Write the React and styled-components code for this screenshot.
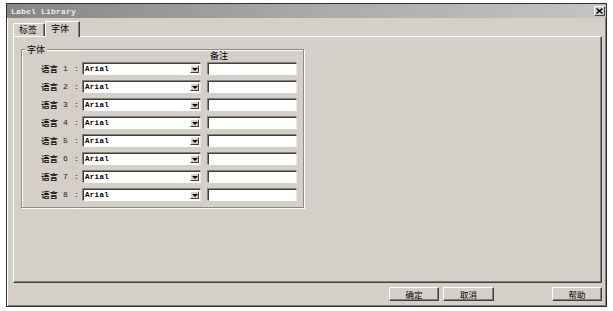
import React from 'react'
import styled, { createGlobalStyle } from 'styled-components'

const GlobalStyle = createGlobalStyle`
  html, body {
    margin: 0;
    background: #ffffff;
  }
  * {
    box-sizing: border-box;
  }
`

const cjk = `"Noto Sans CJK SC", "Liberation Sans", sans-serif`

const Window = styled.div`
  margin: 3px 0 0 6px;
  width: 601px;
  height: 304px;
  border: 1px solid #2e2e2e;
  background: #d4d0c8;
  display: flex;
  flex-direction: column;
  box-shadow: inset 1px 1px 0 #ffffff, inset -1px -1px 0 #808080;
`

const TitleBar = styled.div`
  height: 14px;
  display: flex;
  align-items: center;
  justify-content: space-between;
  padding: 0 1px 0 4px;
  background: linear-gradient(to right, #868686, #a9a9a9 50%, #c4c4c4);
`

const Title = styled.span`
  font-family: "Liberation Mono", monospace;
  font-weight: bold;
  font-size: 8px;
  color: #ececec;
  letter-spacing: 0.2px;
`

const CloseButton = styled.div`
  width: 11px;
  height: 10px;
  background: #d4d0c8;
  border: 1px solid;
  border-color: #ffffff #404040 #404040 #ffffff;
  display: flex;
  align-items: center;
  justify-content: center;
`

const Body = styled.div`
  flex: 1;
  display: flex;
  flex-direction: column;
  padding: 3px 4px 0 6px;
`

const TabRow = styled.div`
  height: 15px;
  display: flex;
  align-items: flex-end;
`

const Tab = styled.div`
  position: relative;
  z-index: ${p => (p.$active ? 1 : 0)};
  height: ${p => (p.$active ? '16px' : '13px')};
  margin-bottom: ${p => (p.$active ? '-1px' : '0')};
  width: ${p => p.$width}px;
  padding: ${p => (p.$active ? '2px 0 0 5px' : '1px 0 0 5px')};
  background: #d4d0c8;
  border-top: 1px solid #ffffff;
  border-left: 1px solid #ffffff;
  border-right: 1px solid #404040;
  box-shadow: inset -1px 0 0 #808080;
  font-family: ${cjk};
  font-size: 9px;
  line-height: 10px;
  color: #000;
`

const Panel = styled.div`
  height: 247px;
  border: 1px solid;
  border-color: #ffffff #404040 #404040 #ffffff;
  box-shadow: inset -1px -1px 0 #808080;
  padding: 12px 0 0 7px;
`

const Group = styled.div`
  position: relative;
  width: 283px;
  height: 159px;
  border: 1px solid #8a8a8a;
  box-shadow: inset 1px 1px 0 #ffffff, 1px 1px 0 #ffffff;
  padding: 1px 0 0 19px;
`

const Legend = styled.span`
  position: absolute;
  top: -6px;
  left: 3px;
  padding: 0 2px;
  background: #d4d0c8;
  font-family: ${cjk};
  font-size: 9px;
  line-height: 11px;
  color: #000;
`

const Header = styled.div`
  height: 10px;
  padding-left: 169px;
  font-family: ${cjk};
  font-size: 9px;
  line-height: 10px;
  color: #000;
`

const Rows = styled.div`
  margin-top: 2px;
  display: flex;
  flex-direction: column;
  gap: 6px;
`

const Row = styled.div`
  height: 12px;
  display: flex;
  align-items: center;
`

const Label = styled.div`
  width: 42px;
  height: 12px;
  display: flex;
  align-items: center;
  color: #000;
`

const Word = styled.span`
  font-family: ${cjk};
  font-size: 8.5px;
  font-weight: 500;
  line-height: 10px;
  margin-top: -2px;
`

const Num = styled.span`
  width: ${p => p.$width}px;
  padding-left: ${p => p.$pad}px;
  font-family: "Liberation Mono", monospace;
  font-size: 8px;
  line-height: 10px;
  color: #222;
`

const Select = styled.div`
  width: 118px;
  height: 12px;
  display: flex;
  align-items: center;
  justify-content: space-between;
  background: #ffffff;
  border-top: 1px solid #404040;
  border-left: 1px solid #404040;
  border-bottom: 1px solid #ffffff;
  border-right: 1px solid #e8e8e8;
  box-shadow: -1px -1px 0 #808080;
  padding: 0 1px 0 1px;
`

const SelectText = styled.span`
  font-family: "Liberation Mono", monospace;
  font-weight: bold;
  font-size: 7.5px;
  letter-spacing: 0.3px;
  color: #000;
`

const DropButton = styled.div`
  width: 9px;
  height: 8px;
  background: #d4d0c8;
  border: 1px solid;
  border-color: #ffffff #404040 #404040 #ffffff;
  display: flex;
  align-items: center;
  justify-content: center;

  &::after {
    content: '';
    border-left: 3px solid transparent;
    border-right: 3px solid transparent;
    border-top: 3px solid #000;
  }
`

const Input = styled.div`
  width: 89px;
  height: 12px;
  margin-left: 7px;
  background: #ffffff;
  border-top: 1px solid #404040;
  border-left: 1px solid #404040;
  border-bottom: 1px solid #ffffff;
  border-right: 1px solid #e8e8e8;
  box-shadow: -1px -1px 0 #808080;
`

const Footer = styled.div`
  height: 23px;
  display: flex;
  justify-content: flex-end;
  align-items: flex-start;
  padding-top: 4px;
  gap: 4px;
`

const Button = styled.div`
  width: ${p => p.$width}px;
  height: 14px;
  margin-left: ${p => p.$gap || 0}px;
  background: #d4d0c8;
  border: 1px solid;
  border-color: #ffffff #404040 #404040 #ffffff;
  box-shadow: inset -1px -1px 0 #808080;
  display: flex;
  align-items: center;
  justify-content: center;
  font-family: ${cjk};
  font-size: 8.5px;
  line-height: 10px;
  color: #000;
`

const rows = [1, 2, 3, 4, 5, 6, 7, 8]

const App = () => (
  <>
    <GlobalStyle />
    <Window>
      <TitleBar>
        <Title>Label Library</Title>
        <CloseButton>
          <svg width="7" height="6" viewBox="0 0 7 6">
            <path d="M0.5 0.5 L6.5 5.5 M6.5 0.5 L0.5 5.5" stroke="#000" strokeWidth="1.4" />
          </svg>
        </CloseButton>
      </TitleBar>
      <Body>
        <TabRow>
          <Tab $width={32}>标签</Tab>
          <Tab $width={35} $active>
            字体
          </Tab>
        </TabRow>
        <Panel>
          <Group>
            <Legend>字体</Legend>
            <Header>备注</Header>
            <Rows>
              {rows.map(n => (
                <Row key={n}>
                  <Label>
                    <Word>语言</Word>
                    <Num $width={16} $pad={5}>
                      {n}
                    </Num>
                    <Num $width={9} $pad={0}>
                      :
                    </Num>
                  </Label>
                  <Select>
                    <SelectText>Arial</SelectText>
                    <DropButton />
                  </Select>
                  <Input />
                </Row>
              ))}
            </Rows>
          </Group>
        </Panel>
        <Footer>
          <Button $width={50}>确定</Button>
          <Button $width={51}>取消</Button>
          <Button $width={50} $gap={54}>
            帮助
          </Button>
        </Footer>
      </Body>
    </Window>
  </>
)

export default App
